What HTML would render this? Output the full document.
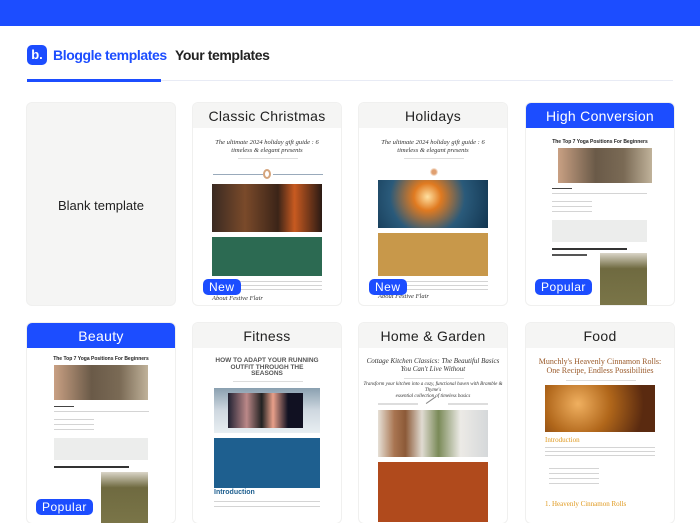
<!DOCTYPE html>
<html><head><meta charset="utf-8"><style>
*{margin:0;padding:0;box-sizing:border-box}
body{width:700px;height:510px;overflow:hidden;background:#fff;font-family:"Liberation Sans",sans-serif;position:relative}
.top{position:absolute;left:0;top:0;width:700px;height:26px;background:#1c4dff}
.tab{position:absolute;top:47px;font-size:14px;font-weight:bold;letter-spacing:-0.4px}
.line{position:absolute;top:80px;left:27px;width:646px;height:1px;background:#e8ebf5}
.uline{position:absolute;top:79px;left:27px;width:134px;height:3px;background:#1c4dff}
.card{position:absolute;width:148px;border-radius:5px;background:#fff;overflow:hidden;box-shadow:0 0 0 1px #f0f0ef}
.hd{height:25px;background:#f5f5f4;text-align:center;font-size:14px;line-height:27px;color:#222;letter-spacing:0.3px}
.hd.b{background:#1c4dff;color:#fff}
.a{position:absolute}
.t{position:absolute;left:0;width:148px;text-align:center;font-family:"Liberation Serif",serif;font-style:italic;font-size:6.5px;line-height:8px;color:#333}
.ln{position:absolute;height:1px;background:#d4d4d4}
.badge{position:absolute;background:#1c4dff;color:#fff;font-size:12px;padding:0 6px;height:16px;line-height:16px;border-radius:5px;letter-spacing:0.5px}
</style></head><body>
<div class="top"></div>
<div class="a" style="left:27px;top:45px;width:20px;height:20px;background:#1c4dff;border-radius:5px;color:#fff;font-weight:bold;font-size:13px;line-height:19px;text-align:center">b.</div>
<div class="tab" style="left:53px;color:#1c4dff">Bloggle templates</div>
<div class="tab" style="left:175px;color:#222">Your templates</div>
<div class="line"></div><div class="uline"></div>

<div class="card" style="left:27px;top:103px;height:202px;background:#f5f5f4"><div class="a" style="top:95px;width:148px;text-align:center;font-size:13px;color:#222">Blank template</div></div>

<div class="card" style="left:193px;top:103px;height:202px">
<div class="hd">Classic Christmas</div>
<div class="t" style="top:36px">The ultimate 2024 holiday gift guide : 6<br>timeless &amp; elegant presents</div>
<div class="ln" style="left:45px;top:55px;width:60px;background:#ddd"></div>
<div class="ln" style="left:20px;top:71px;width:50px;background:#9ab"></div>
<div class="ln" style="left:80px;top:71px;width:50px;background:#9ab"></div>
<div class="a" style="left:70px;top:66px;width:8px;height:10px;border:2px solid #d4a47c;border-radius:50%"></div>
<div class="a" style="left:19px;top:81px;width:110px;height:48px;background:linear-gradient(90deg,#3a2a22,#7a4a2a 30%,#3b2418 60%,#c85a20 75%,#2a1a14);"></div>
<div class="a" style="left:19px;top:134px;width:110px;height:39px;background:#2c6a52"></div>
<div class="ln" style="left:19px;top:178px;width:110px"></div>
<div class="ln" style="left:19px;top:182px;width:110px"></div>
<div class="ln" style="left:19px;top:186px;width:110px"></div>
<div class="t" style="top:192px;text-align:left;left:19px">About Festive Flair</div>
<div class="badge" style="left:10px;top:176px">New</div>
</div>

<div class="card" style="left:359px;top:103px;height:202px">
<div class="hd">Holidays</div>
<div class="t" style="top:36px">The ultimate 2024 holiday gift guide : 6<br>timeless &amp; elegant presents</div>
<div class="ln" style="left:45px;top:55px;width:60px;background:#ddd"></div>
<div class="a" style="left:70px;top:64px;width:10px;height:10px;border-radius:50%;background:radial-gradient(#e0a070 30%,transparent 60%)"></div>
<div class="a" style="left:19px;top:77px;width:110px;height:48px;background:radial-gradient(circle at 45% 35%,#ffe0a0 0,#e07a20 20%,#2a5a7a 55%,#123550 100%)"></div>
<div class="a" style="left:19px;top:130px;width:110px;height:43px;background:#c8984a"></div>
<div class="ln" style="left:19px;top:178px;width:110px"></div>
<div class="ln" style="left:19px;top:182px;width:110px"></div>
<div class="ln" style="left:19px;top:186px;width:110px"></div>
<div class="t" style="top:190px;text-align:left;left:19px">About Festive Flair</div>
<div class="badge" style="left:10px;top:176px">New</div>
</div>

<div class="card" style="left:526px;top:103px;height:202px">
<div class="hd b">High Conversion</div>
<div class="a" style="left:0;top:36px;width:148px;text-align:center;font-size:5px;font-weight:bold;color:#222">The Top 7 Yoga Positions For Beginners</div>
<div class="a" style="left:32px;top:45px;width:94px;height:35px;background:linear-gradient(90deg,#c9a083,#6a5a48 40%,#7a6a55 70%,#c0b29a)"></div>
<div class="ln" style="left:26px;top:85px;width:20px;background:#444"></div>
<div class="ln" style="left:26px;top:90px;width:95px"></div>
<div class="ln" style="left:26px;top:98px;width:40px"></div>
<div class="ln" style="left:26px;top:103px;width:40px"></div>
<div class="ln" style="left:26px;top:108px;width:40px"></div>
<div class="a" style="left:26px;top:117px;width:95px;height:22px;background:#ecedec"></div>
<div class="ln" style="left:26px;top:145px;width:75px;height:2px;background:#333"></div>
<div class="ln" style="left:26px;top:151px;width:35px;height:2px;background:#555"></div>
<div class="a" style="left:74px;top:150px;width:47px;height:52px;background:linear-gradient(#dad5c8,#6f6a40 30%,#7a7548)"></div>
<div class="badge" style="left:9px;top:176px">Popular</div>
</div>

<div class="card" style="left:27px;top:323px;height:200px">
<div class="hd b">Beauty</div>
<div class="a" style="left:0;top:33px;width:148px;text-align:center;font-size:5px;font-weight:bold;color:#222">The Top 7 Yoga Positions For Beginners</div>
<div class="a" style="left:27px;top:42px;width:94px;height:35px;background:linear-gradient(90deg,#c9a083,#6a5a48 40%,#7a6a55 70%,#c0b29a)"></div>
<div class="ln" style="left:27px;top:83px;width:20px;background:#444"></div>
<div class="ln" style="left:27px;top:88px;width:95px"></div>
<div class="ln" style="left:27px;top:96px;width:40px"></div>
<div class="ln" style="left:27px;top:101px;width:40px"></div>
<div class="ln" style="left:27px;top:106px;width:40px"></div>
<div class="a" style="left:27px;top:115px;width:94px;height:22px;background:#ecedec"></div>
<div class="ln" style="left:27px;top:143px;width:75px;height:2px;background:#333"></div>
<div class="a" style="left:74px;top:149px;width:47px;height:52px;background:linear-gradient(#dad5c8,#6f6a40 30%,#7a7548)"></div>
<div class="badge" style="left:9px;top:176px">Popular</div>
</div>

<div class="card" style="left:193px;top:323px;height:200px">
<div class="hd">Fitness</div>
<div class="a" style="left:0;top:35px;width:148px;text-align:center;font-size:6.5px;line-height:6.5px;font-weight:bold;color:#555">HOW TO ADAPT YOUR RUNNING<br>OUTFIT THROUGH THE<br>SEASONS</div>
<div class="ln" style="left:40px;top:58px;width:70px;background:#ddd"></div>
<div class="a" style="left:21px;top:65px;width:106px;height:45px;background:linear-gradient(#8aa0b0,#cfd8e0 50%,#e8eef2);"></div>
<div class="a" style="left:35px;top:70px;width:75px;height:35px;background:linear-gradient(90deg,#223,#b88 25%,#222 45%,#e9a08a 60%,#112 80%)"></div>
<div class="a" style="left:21px;top:115px;width:106px;height:50px;background:#1e5f8f"></div>
<div class="a" style="left:21px;top:166px;font-size:7px;color:#1e5f8f;font-weight:bold">Introduction</div>
<div class="ln" style="left:21px;top:178px;width:106px"></div>
<div class="ln" style="left:21px;top:183px;width:106px"></div>
</div>

<div class="card" style="left:359px;top:323px;height:200px">
<div class="hd">Home &amp; Garden</div>
<div class="t" style="top:34px;font-size:7px">Cottage Kitchen Classics: The Beautiful Basics<br>You Can't Live Without</div>
<div class="ln" style="left:45px;top:55px;width:60px;background:#ddd"></div>
<div class="t" style="top:59px;font-size:5px;line-height:6px">Transform your kitchen into a cozy, functional haven with Bramble &amp; Thyme's<br>essential collection of timeless basics</div>
<div class="ln" style="left:19px;top:80px;width:40px;height:2px;background:#ddd"></div>
<div class="ln" style="left:89px;top:80px;width:40px;height:2px;background:#ddd"></div>
<div class="a" style="left:68px;top:76px;width:12px;height:8px;border-top:1px solid #888;transform:rotate(-35deg)"></div>
<div class="a" style="left:19px;top:87px;width:110px;height:47px;background:linear-gradient(90deg,#e6e0d6,#a87450 15%,#8c5a38 25%,#e0dbd2 40%,#7a8a58 55%,#eceae6 75%,#d5d8da)"></div>
<div class="a" style="left:19px;top:139px;width:110px;height:60px;background:#b04a1c"></div>
</div>

<div class="card" style="left:526px;top:323px;height:200px">
<div class="hd">Food</div>
<div class="a" style="left:0;top:34px;width:148px;text-align:center;font-family:'Liberation Serif',serif;font-size:8px;line-height:9px;color:#9a5a2a">Munchly's Heavenly Cinnamon Rolls:<br>One Recipe, Endless Possibilities</div>
<div class="ln" style="left:40px;top:57px;width:70px;background:#ddd"></div>
<div class="a" style="left:19px;top:62px;width:110px;height:47px;background:radial-gradient(circle at 30% 40%,#f0b060,#b0661a 40%,#5a2a10 80%)"></div>
<div class="a" style="left:19px;top:113px;font-family:'Liberation Serif',serif;font-size:7px;color:#e09a20">Introduction</div>
<div class="ln" style="left:19px;top:124px;width:110px"></div>
<div class="ln" style="left:19px;top:128px;width:110px"></div>
<div class="ln" style="left:19px;top:132px;width:110px"></div>
<div class="ln" style="left:23px;top:145px;width:50px"></div>
<div class="ln" style="left:23px;top:150px;width:50px"></div>
<div class="ln" style="left:23px;top:155px;width:50px"></div>
<div class="ln" style="left:23px;top:160px;width:50px"></div>
<div class="a" style="left:19px;top:177px;font-family:'Liberation Serif',serif;font-size:7px;color:#e09a20">1. Heavenly Cinnamon Rolls</div>
</div>
</body></html>
